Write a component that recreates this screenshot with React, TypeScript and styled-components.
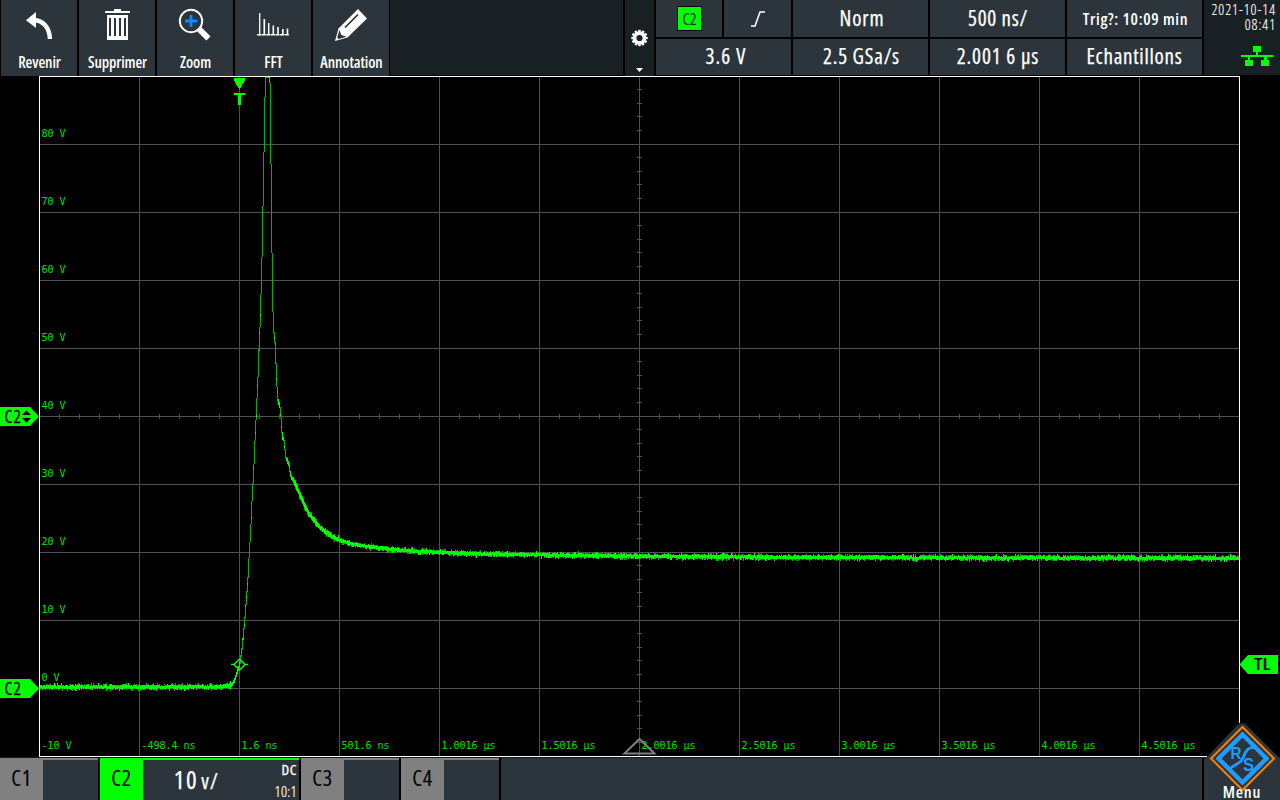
import React from "react";
import styled, { createGlobalStyle } from "styled-components";

const PANEL = "#2b353b";
const DARK = "#192023";
const GREEN = "#00ff00";
const GREY = "#808080";
const SANS = '"Open Sans", "Noto Sans", sans-serif';

const Global = createGlobalStyle`
  html, body { margin: 0; padding: 0; background: #000; overflow: hidden; }
  * { box-sizing: border-box; }
`;

const Screen = styled.div`
  width: 1280px;
  height: 800px;
  display: flex;
  flex-direction: column;
  background: #000;
  color: #fff;
  font-family: ${SANS};
  font-stretch: 75%;
`;

const TopBar = styled.header`
  height: 76px;
  flex: none;
  display: flex;
  padding-left: 1px;
`;

const ToolButton = styled.div`
  width: 76px;
  height: 76px;
  margin-right: 2px;
  background: ${PANEL};
  display: flex;
  flex-direction: column;
  align-items: center;
  & > span { padding-left: 1px; }
  &:nth-child(5) { margin-right: 1px; }
`;

const ToolIcon = styled.svg`
  width: 76px;
  height: 50px;
  flex: none;
  display: block;
`;

const Label = styled.span<{ $size: number; $weight?: number; $spacing?: number; $stroke?: number }>`
  font-size: ${(p) => p.$size}px;
  font-weight: ${(p) => p.$weight ?? 400};
  letter-spacing: ${(p) => p.$spacing ?? 0}px;
  -webkit-text-stroke: ${(p) => p.$stroke ?? 0}px currentColor;
  line-height: 24px;
  white-space: nowrap;
`;

const Filler = styled.div`
  width: 233px;
  height: 75px;
  background: ${DARK};
`;

const Gear = styled.svg`
  width: 29px;
  height: 76px;
  margin: 0 2px;
  background: ${DARK};
  display: block;
`;

const StatusGrid = styled.div`
  display: grid;
  grid-template-columns: 66px 67px 135px 135px 135px;
  grid-template-rows: 37px 36px;
  column-gap: 2px;
  row-gap: 2px;
  height: 76px;
`;

const Cell = styled.div<{ $span?: number; $lift?: number; $shift?: number }>`
  grid-column: span ${(p) => p.$span ?? 1};
  background: ${PANEL};
  display: flex;
  align-items: center;
  justify-content: center;
  padding: 0 0 ${(p) => p.$lift ?? 0}px ${(p) => p.$shift ?? 1}px;
`;

const SourceBadge = styled.div`
  width: 25px;
  height: 25px;
  border: 1px solid #000;
  background: ${GREEN};
  color: #0c2b0c;
  display: flex;
  align-items: center;
  justify-content: center;
`;

const Clock = styled.div`
  width: 76px;
  height: 75px;
  margin-left: 2px;
  background: ${DARK};
  display: flex;
  flex-direction: column;
  align-items: flex-end;
  padding: 2px 4px 0 0;
  & > span { line-height: 15px; }
`;

const NetIcon = styled.svg`
  width: 33px;
  height: 22px;
  margin: 13px 2px 0 0;
  display: block;
  flex: none;
`;

const Stage = styled.main`
  height: 681px;
  flex: none;
  display: flex;
`;

const Plot = styled.svg`
  width: 1280px;
  height: 681px;
  display: block;
`;

const BottomBar = styled.footer`
  height: 43px;
  flex: none;
  display: flex;
  gap: 2px;
  border-top: 1px solid #141a1c;
`;

const Channel = styled.div<{ $w: number; $color: string }>`
  width: ${(p) => p.$w}px;
  height: 42px;
  display: flex;
  border-top: 2px solid ${(p) => p.$color};
  background: ${PANEL};
`;

const ChannelName = styled.div<{ $color: string }>`
  width: 43px;
  height: 40px;
  background: ${(p) => p.$color};
  color: #000;
  display: flex;
  align-items: center;
  justify-content: center;
  padding-bottom: 6px;
`;

const Scale = styled.div`
  flex: 1;
  display: flex;
  align-items: baseline;
  justify-content: flex-end;
  gap: 3px;
  padding: 7px 0 0 0;
`;

const Coupling = styled.div`
  width: 80px;
  display: flex;
  flex-direction: column;
  align-items: flex-end;
  padding-right: 2px;
  margin-top: -2px;
  & > span { line-height: 22px; }
`;

const Rest = styled.div`
  width: 701px;
  background: ${PANEL};
`;

const MenuButton = styled.div`
  width: 76px;
  height: 42px;
  position: relative;
  background: ${PANEL};
  display: flex;
  align-items: flex-end;
  justify-content: center;
  & > span { position: relative; line-height: 17px; }
`;

const Logo = styled.svg`
  position: absolute;
  left: 0;
  top: -35px;
  width: 76px;
  height: 77px;
`;

/* Vertical extents of the trace on the columns around the pulse */
const PULSE: Array<[number, number, number]> = [
  [231, 683, 687], [232, 682, 686], [233, 680, 684], [234, 678, 683], [235, 675, 680],
  [236, 672, 677], [237, 669, 674], [238, 666, 671], [239, 661, 668], [240, 655, 664],
  [241, 648, 657], [242, 638, 650], [243, 628, 640], [244, 617, 629], [245, 604, 618],
  [246, 591, 605], [247, 577, 592], [248, 558, 578], [249, 542, 558], [250, 524, 542],
  [251, 501, 524], [252, 483, 501], [253, 464, 483], [254, 441, 464], [255, 420, 441],
  [256, 398, 420], [257, 377, 398], [258, 349, 377], [259, 327, 351], [260, 294, 327],
  [261, 257, 294], [262, 206, 257], [263, 152, 206], [264, 97, 152], [265, 77, 97],
  [269, 77, 83], [270, 83, 164], [271, 164, 253], [272, 253, 312], [273, 312, 333],
  [274, 332, 343], [275, 342, 364], [276, 363, 387], [277, 387, 401], [278, 399, 405],
  [279, 402, 408], [280, 407, 418], [281, 418, 433], [282, 432, 440], [283, 437, 441],
  [284, 440, 450], [285, 449, 458], [286, 457, 461], [287, 458, 464], [288, 461, 466],
  [289, 463, 472], [290, 471, 477], [291, 475, 480], [292, 477, 481],
];

/* Mean level of the slower parts of the trace */
const LEVEL: Array<[number, number]> = [
  [40, 687], [210, 687], [222, 686.3], [230, 685], [293, 480], [296, 487], [300, 496], [305, 507],
  [310, 516], [315, 522.5], [320, 528], [325, 532], [330, 535.5], [335, 538.5], [340, 540.5],
  [350, 543.5], [360, 545.6], [370, 547], [380, 548.2], [400, 550], [420, 551.6], [440, 552.6],
  [480, 554], [560, 555.3], [640, 556.3], [760, 557.2], [900, 557.8], [1239, 558.2],
];

function level(x: number) {
  for (let i = 1; i < LEVEL.length; i++) {
    const [x0, y0] = LEVEL[i - 1];
    const [x1, y1] = LEVEL[i];
    if (x <= x1) return y0 + ((y1 - y0) * (x - x0)) / (x1 - x0);
  }
  return LEVEL[LEVEL.length - 1][1];
}

function buildTrace() {
  let seed = 7;
  const rnd = () => {
    seed = (seed * 16807) % 2147483647;
    return seed / 2147483647;
  };
  let dim = "";
  let bright = "";
  const steep = new Map(PULSE.map(([x, a, b]) => [x, [a, b]] as const));
  for (let x = 40; x < 1239; x++) {
    const s = steep.get(x);
    if (s) {
      const tall = s[1] - s[0] > 8;
      if (tall) {
        dim += `M${x + 0.5} ${s[0]}V${s[1]}`;
        if (s[0] > 270 && rnd() > 0.4) {
          const y = Math.round(s[0] + rnd() * (s[1] - s[0] - 2));
          bright += `M${x + 0.5} ${y}v2`;
        }
      } else {
        bright += `M${x + 0.5} ${s[0]}V${s[1]}`;
      }
      continue;
    }
    if (x > 230 && x < 293) continue;
    const slope = Math.abs(level(x + 1) - level(x));
    const y = level(x) + (rnd() - 0.5) * 0.9;
    const half = 1.6 + slope * 0.6;
    const top = Math.round(y - half);
    const bot = Math.round(y + half);
    const up = rnd() < 0.62 ? 1 + (rnd() < 0.25 ? 1 : 0) : 0;
    const down = rnd() < 0.55 ? 1 + (rnd() < 0.25 ? 1 : 0) : 0;
    dim += `M${x + 0.5} ${top - up}V${bot + down}`;
    bright += `M${x + 0.5} ${top - (rnd() < 0.35 ? up : 0)}V${bot + (rnd() < 0.3 ? down : 0)}`;
  }
  return { dim, bright };
}

const trace = buildTrace();

const VOLTS = ["80 V", "70 V", "60 V", "50 V", "40 V", "30 V", "20 V", "10 V", "0 V", "-10 V"];
const TIMES = [
  "-498.4 ns", "1.6 ns", "501.6 ns", "1.0016 µs", "1.5016 µs", "2.0016 µs",
  "2.5016 µs", "3.0016 µs", "3.5016 µs", "4.0016 µs", "4.5016 µs",
];

function gridPath() {
  let d = "";
  for (let i = 1; i < 12; i++) d += `M${39.5 + i * 100} 77V756`;
  for (let i = 1; i < 10; i++) d += `M40 ${76.5 + i * 68}H1239`;
  for (let i = 1; i < 60; i++) d += `M${39.5 + i * 20} 414V419`;
  for (let i = 1; i < 50; i++) d += `M637 ${Math.floor(76 + i * 13.6) + 0.5}H642`;
  return d;
}

function AxisText({ x, y, children }: { x: number; y: number; children: string }) {
  return (
    <text
      x={x}
      y={y}
      fill="#00e400"
      fontFamily='"DejaVu Sans Mono", monospace'
      fontSize="11"
      textLength={children.length * 6}
      lengthAdjust="spacingAndGlyphs"
      xmlSpace="preserve"
    >
      {children}
    </text>
  );
}

function Waveform() {
  return (
    <Plot viewBox="0 76 1280 681">
      <path d={gridPath()} stroke="#505050" fill="none" shapeRendering="crispEdges" />
      {VOLTS.map((v, i) => (
        <AxisText key={v} x={41.5} y={i === 9 ? 749 : i === 8 ? 681 : 137 + i * 68}>{v}</AxisText>
      ))}
      {TIMES.map((t, i) => (
        <AxisText key={t} x={141.5 + i * 100} y={749}>{t}</AxisText>
      ))}
      <g fill="none" shapeRendering="crispEdges">
        <path d={trace.dim} stroke="#00b400" />
        <path d={trace.bright} stroke={GREEN} />
        <path d="M265 77.5H269" stroke="#ff4020" />
        <path d="M39.5 756.5V76.5H1239.5V723M39 756.5H1207" stroke="#fff" />
      </g>
      <path d="M639.5 739L624.5 753.5H654.5Z" fill="none" stroke={GREY} strokeWidth="2" />
      <g fill={GREEN} shapeRendering="crispEdges">
        <path d="M234 78H245V80L240 89H239L234 80Z" />
        <path d="M234 93H245V95H241V105H238V95H234Z" />
      </g>
      <path
        d="M239.5 659L245 664.5L239.5 670L234 664.5ZM231 664.5H234M245 664.5H248"
        fill="none"
        stroke={GREEN}
        strokeWidth="1.5"
      />
      <path d="M0 407H30L39 416.5L30 426H0Z" fill={GREEN} />
      <path d="M0 679H30L39 688.5L30 698H0Z" fill={GREEN} />
      <path d="M1239.5 664.5L1248 655H1278V674H1248Z" fill={GREEN} />
      <g fontFamily={SANS} style={{ fontStretch: "75%" }} fill="#000" stroke="#000" strokeWidth=".3">
        <text x="4.5" y="422.5" fontSize="17.5" textLength="16.5">C2</text>
        <text x="4.5" y="694.5" fontSize="17.5" textLength="16.5">C2</text>
      </g>
      <text
        x="1254"
        y="670"
        fontFamily={SANS}
        fontSize="15.5"
        fontWeight="600"
        textLength="16.5"
        lengthAdjust="spacingAndGlyphs"
      >
        TL
      </text>
      <path d="M22 415H31L26.5 410.5ZM22 418H31L26.5 422.5Z" fill="#000" />
    </Plot>
  );
}

function ToolLabel({ children, spacing = -0.08 }: { children: string; spacing?: number }) {
  return <Label $size={15.5} $weight={600} $spacing={spacing}>{children}</Label>;
}

function Value({ children, spacing = 0.7 }: { children: string; spacing?: number }) {
  return <Label $size={21} $spacing={spacing} $stroke={0.25}>{children}</Label>;
}

function GearIcon() {
  const teeth = Array.from({ length: 12 }, (_, i) => i * 30);
  return (
    <Gear viewBox="625 0 29 76">
      <circle cx="639.5" cy="38" r="4.9" fill="none" stroke="#fff" strokeWidth="3.6" />
      {teeth.map((a) => (
        <rect key={a} x="638.3" y="29.8" width="2.4" height="3" fill="#fff" transform={`rotate(${a} 639.5 38)`} />
      ))}
      <path d="M636 68H643L639.5 72Z" fill="#fff" />
    </Gear>
  );
}

function Name({ children }: { children: string }) {
  return <Label $size={22} $spacing={0.6} $stroke={0.1}>{children}</Label>;
}

export default function App() {
  return (
    <Screen>
      <Global />
      <TopBar>
        <ToolButton>
          <ToolIcon viewBox="1 0 76 50">
            <path d="M26 20.3L36 12V28Z" fill="#fff" />
            <path d="M34 20C43 20.5 49.5 27 50 39" fill="none" stroke="#fff" strokeWidth="4.4" />
          </ToolIcon>
          <ToolLabel>Revenir</ToolLabel>
        </ToolButton>
        <ToolButton>
          <ToolIcon viewBox="79 0 76 50">
            <path
              fill="#fff"
              fillRule="evenodd"
              d="M114 9H121V11H130V13H105V11H114ZM107 15H128V40H107ZM109 18V36H111V18ZM114 18V36H116V18ZM119 18V36H121V18ZM124 18V36H126V18Z"
              shapeRendering="crispEdges"
            />
          </ToolIcon>
          <ToolLabel spacing={-0.15}>Supprimer</ToolLabel>
        </ToolButton>
        <ToolButton>
          <ToolIcon viewBox="157 0 76 50">
            <circle cx="191" cy="21" r="11.2" fill="none" stroke="#fff" strokeWidth="1.9" />
            <path d="M199 29L208.5 38.5" stroke="#fff" strokeWidth="6" />
            <path d="M185 21H197M191 15V27" stroke="#0c8cff" strokeWidth="2.8" />
          </ToolIcon>
          <ToolLabel>Zoom</ToolLabel>
        </ToolButton>
        <ToolButton>
          <ToolIcon viewBox="235 0 76 50">
            <g stroke="#fff" fill="none">
              <path d="M257 34.7H289" strokeWidth="1.6" strokeDasharray="4.2 .4" />
              <path d="M259.7 13V35.5" strokeWidth="1.3" />
              <path d="M264.3 19V35" strokeWidth="1.7" />
              <path d="M268.7 23V35" strokeWidth="1.5" />
              <path d="M273.3 25.5V35" strokeWidth="1.6" />
              <path d="M278 27V35M282.8 29V35M287.5 28.5V35" strokeWidth="1.6" />
            </g>
          </ToolIcon>
          <ToolLabel>FFT</ToolLabel>
        </ToolButton>
        <ToolButton>
          <ToolIcon viewBox="313 0 76 50">
            <path d="M358 9L367 18.5L347.5 37.5L335 41L338.5 28.5Z" fill="#fff" />
            <path d="M358 14.5L345 27.5" stroke={PANEL} strokeWidth="1.7" />
            <path d="M339.5 30L341.3 35L346.5 36.8L338.6 39L337.2 37.6Z" fill={PANEL} />
          </ToolIcon>
          <ToolLabel>Annotation</ToolLabel>
        </ToolButton>
        <Filler />
        <GearIcon />
        <StatusGrid>
          <Cell>
            <SourceBadge><Label $size={16}>C2</Label></SourceBadge>
          </Cell>
          <Cell>
            <svg width="14" height="18" viewBox="0 0 14 18">
              <path d="M0 16H4L9 2H14" fill="none" stroke="#fff" strokeWidth="1.6" />
            </svg>
          </Cell>
          <Cell $lift={1} $shift={3}><Value spacing={0.9}>Norm</Value></Cell>
          <Cell $lift={1}><Value>500 ns/</Value></Cell>
          <Cell $shift={2}><Label $size={16.5} $weight={600} $spacing={0.65}>Trig?: 10:09 min</Label></Cell>
          <Cell $span={2} $lift={2} $shift={5}><Value spacing={1.1}>3.6 V</Value></Cell>
          <Cell $lift={2} $shift={2}><Value spacing={0.8}>2.5 GSa/s</Value></Cell>
          <Cell $lift={2}><Value spacing={0.9}>2.001 6 µs</Value></Cell>
          <Cell $lift={2} $shift={0}><Value spacing={0.75}>Echantillons</Value></Cell>
        </StatusGrid>
        <Clock>
          <Label $size={14.5} $weight={300} $spacing={0.95} $stroke={0.15}>2021-10-14</Label>
          <Label $size={14.5} $weight={300} $spacing={0.95} $stroke={0.15}>08:41</Label>
          <NetIcon viewBox="0 0 33 22">
            <path d="M12 1H20V7H17V10H32V12H26V15H28V21H20V15H23V12H9V15H12V21H4V15H7V12H0V10H15V7H12Z" fill={GREEN} />
          </NetIcon>
        </Clock>
      </TopBar>
      <Stage><Waveform /></Stage>
      <BottomBar>
        <Channel $w={98} $color={GREY}>
          <ChannelName $color={GREY}><Name>C1</Name></ChannelName>
        </Channel>
        <Channel $w={199} $color={GREEN}>
          <ChannelName $color={GREEN}><Name>C2</Name></ChannelName>
          <Scale>
            <Label $size={25} $spacing={1.6} $stroke={0.25}>10</Label>
            <Label $size={21} $spacing={1.2} $stroke={0.25}>v/</Label>
          </Scale>
          <Coupling>
            <Label $size={15} $stroke={0.3} $spacing={0.6}>DC</Label>
            <Label $size={15} $weight={300} $spacing={0.3} $stroke={0.2}>10:1</Label>
          </Coupling>
        </Channel>
        <Channel $w={98} $color={GREY}>
          <ChannelName $color={GREY}><Name>C3</Name></ChannelName>
        </Channel>
        <Channel $w={98} $color={GREY}>
          <ChannelName $color={GREY}><Name>C4</Name></ChannelName>
        </Channel>
        <Rest />
        <MenuButton>
          <Logo viewBox="1204 723 76 77">
            <path d="M1239 723.5H1245L1280 758.5V790H1204V760Z" fill={PANEL} />
            <path d="M1242.5 727L1274 758.5L1242.5 790L1211 758.5Z" fill={PANEL} stroke="#ff8000" strokeWidth="2" />
            <path d="M1242.5 734.5L1266.5 758.5L1242.5 782.5L1218.5 758.5Z" fill="none" stroke="#1e9cff" strokeWidth="4.4" />
            <path d="M1256 747.5C1248 746.5 1245.5 751 1243.5 757C1241 764 1237 762.5 1229.5 769" fill="none" stroke="#1e9cff" strokeWidth="2.8" />
            <g fill="#1e9cff" fontFamily='"Liberation Sans", sans-serif' fontWeight="700">
              <text x="1230.5" y="759" fontSize="17" textLength="11" lengthAdjust="spacingAndGlyphs">R</text>
              <text x="1243" y="770.5" fontSize="18" textLength="11" lengthAdjust="spacingAndGlyphs">S</text>
            </g>
          </Logo>
          <Label $size={16.5} $weight={600} $spacing={0.8}>Menu</Label>
        </MenuButton>
      </BottomBar>
    </Screen>
  );
}
